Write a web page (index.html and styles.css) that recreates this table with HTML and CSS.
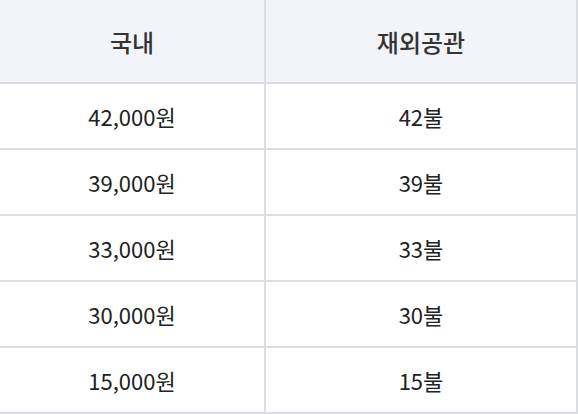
FILE: index.html
```html
<!DOCTYPE html>
<html lang="ko">
<head>
<meta charset="utf-8">
<link rel="stylesheet" href="styles.css">
</head>
<body>
<div class="fee-table">
  <div class="cell head">국내</div>
  <div class="cell head">재외공관</div>
  <div class="cell">42,000원</div>
  <div class="cell">42불</div>
  <div class="cell">39,000원</div>
  <div class="cell">39불</div>
  <div class="cell">33,000원</div>
  <div class="cell">33불</div>
  <div class="cell">30,000원</div>
  <div class="cell">30불</div>
  <div class="cell">15,000원</div>
  <div class="cell">15불</div>
</div>
</body>
</html>
```
FILE: styles.css
```css
html, body {
  margin: 0;
  padding: 0;
  background: #ffffff;
}
.fee-table {
  display: grid;
  grid-template-columns: 266px 312px;
  grid-template-rows: 84px repeat(5, 66px);
  width: 578px;
  font-family: "Noto Sans CJK KR", "Noto Sans", sans-serif;
}
.cell {
  box-sizing: border-box;
  display: flex;
  align-items: center;
  justify-content: center;
  border-right: 2px solid #dcdce3;
  border-bottom: 2px solid #dcdce3;
  font-size: 22px;
  color: #222222;
}
.head {
  background: #f3f4f9;
  font-size: 24px;
  font-weight: 500;
  color: #333333;
}
```
